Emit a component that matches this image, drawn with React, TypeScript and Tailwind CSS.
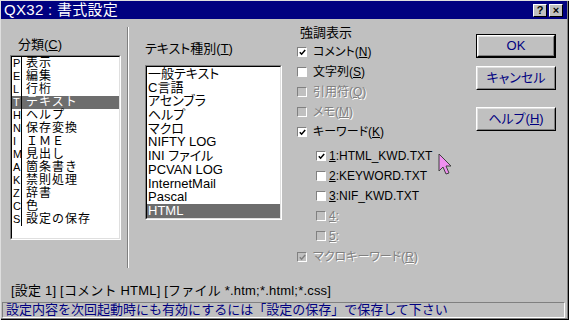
import type { ReactNode } from 'react';

const categories: [string, string][] = [
  ['P', '表示'],
  ['E', '編集'],
  ['L', '行桁'],
  ['T', 'テキスト'],
  ['H', 'ヘルプ'],
  ['N', '保存変換'],
  ['I', 'ＩＭＥ'],
  ['M', '見出し'],
  ['A', '箇条書き'],
  ['K', '禁則処理'],
  ['Z', '辞書'],
  ['C', '色'],
  ['S', '設定の保存'],
];

const textTypes = [
  '一般テキスト',
  'C言語',
  'アセンブラ',
  'ヘルプ',
  'マクロ',
  'NIFTY LOG',
  'INI ファイル',
  'PCVAN LOG',
  'InternetMail',
  'Pascal',
  'HTML',
];

function U({ children }: { children: ReactNode }) {
  return <span className="underline underline-offset-[1px]">{children}</span>;
}

function Sunken({ className, children }: { className?: string; children: ReactNode }) {
  return (
    <div className={`border border-t-[#808080] border-l-[#808080] border-b-white border-r-white ${className ?? ''}`}>
      <div className="h-full border border-t-black border-l-black border-b-[#dfdfdf] border-r-[#dfdfdf] bg-white overflow-hidden">
        {children}
      </div>
    </div>
  );
}

function Button({ children, isDefault }: { children: ReactNode; isDefault?: boolean }) {
  const inner = (
    <div className="h-full border border-t-white border-l-white border-b-black border-r-black">
      <div className="h-full flex items-center justify-center border border-t-[#dfdfdf] border-l-[#dfdfdf] border-b-[#808080] border-r-[#808080] text-[13px] text-[#000080]">
        {children}
      </div>
    </div>
  );
  return isDefault ? (
    <div className="h-[24px] border border-black">{inner}</div>
  ) : (
    <div className="h-[24px]">{inner}</div>
  );
}

function Check({
  checked,
  disabled,
  children,
  gap = 'gap-[6px]',
}: {
  checked?: boolean;
  disabled?: boolean;
  children: ReactNode;
  gap?: string;
}) {
  return (
    <div className={`h-[20px] flex items-center ${gap}`}>
      <span
        className={`w-[10px] h-[10px] shrink-0 flex items-center justify-center border border-t-[#808080] border-l-[#808080] border-b-white border-r-white ${
          disabled ? 'bg-[#c0c0c0]' : 'bg-white'
        }`}
      >
        {checked && (
          <svg width="7" height="7" viewBox="0 0 7 7">
            <path d="M0.8 3.2 L2.6 5.2 L6.2 1" fill="none" stroke={disabled ? '#808080' : '#000'} strokeWidth="1.5" />
          </svg>
        )}
      </span>
      <span
        className={`text-[12px] leading-[14px] whitespace-nowrap ${
          disabled ? 'text-[#808080] [text-shadow:1px_1px_0_#fff]' : 'text-black'
        }`}
      >
        {children}
      </span>
    </div>
  );
}

export default function App() {
  return (
    <div className="relative w-[569px] h-[320px] overflow-hidden bg-[#c0c0c0] border-t border-l border-[#dfdfdf] shadow-[inset_-1px_-1px_0_#000,inset_-2px_-2px_0_#808080] flex flex-col font-['Liberation_Sans','Noto_Sans_CJK_JP',sans-serif] [font-feature-settings:'palt'] text-black select-none">
      <div className="h-[18px] mr-[2px] bg-[#000080] flex items-center pl-[3px] pr-[4px]">
        <span className="text-white text-[15px] leading-[18px] whitespace-nowrap tracking-[0.3px]">QX32 : 書式設定</span>
        <div className="ml-auto flex gap-[2px]">
          {['?', '×'].map((g) => (
            <div
              key={g}
              className="w-[14px] h-[13px] bg-[#c0c0c0] border border-t-white border-l-white border-b-black border-r-black flex items-center justify-center text-[11px] leading-none font-bold"
            >
              {g}
            </div>
          ))}
        </div>
      </div>

      <div className="h-[262px] flex items-start">
        <div className="w-[126px] pl-[9px] pt-[19px] shrink-0">
          <div className="h-[17px] pl-[8px] text-[13px] leading-[14px]">
            分類(<U>C</U>)
          </div>
          <Sunken className="w-[111px] h-[185px]">
            {categories.map(([k, name], i) => (
              <div
                key={k}
                className={`h-[13px] flex text-[12px] leading-[13px] ${i === 3 ? 'bg-[#6d6d6d] text-white' : ''}`}
              >
                <span className="w-[10px] pl-[1px] border-r border-black text-[11px] leading-[13px]">{k}</span>
                <span className="pl-[4px] whitespace-nowrap tracking-[1px] [font-feature-settings:normal]">{name}</span>
              </div>
            ))}
          </Sunken>
        </div>

        <div className="mt-[8px] h-[241px] w-[2px] border-l border-l-[#808080] border-r border-r-white shrink-0" />

        <div className="ml-[16px] pt-[23px] shrink-0">
          <div className="h-[23px] text-[13px] leading-[14px]">
            テキスト種別(<U>T</U>)
          </div>
          <Sunken className="w-[137px] h-[155px]">
            {textTypes.map((t, i) => (
              <div
                key={t}
                className={`h-[13.7px] pl-[1px] text-[13px] leading-[13.7px] whitespace-nowrap ${
                  i === 10 ? 'bg-[#6d6d6d] text-white' : ''
                }`}
              >
                {t}
              </div>
            ))}
          </Sunken>
        </div>

        <div className="ml-[15px] pt-[4px] shrink-0">
          <div className="h-[19px] pl-[3px] text-[13px] leading-[19px]">強調表示</div>
          <Check checked>
            コメント(<U>N</U>)
          </Check>
          <Check>
            文字列(<U>S</U>)
          </Check>
          <Check disabled>
            引用符(<U>Q</U>)
          </Check>
          <Check disabled>
            メモ(<U>M</U>)
          </Check>
          <Check checked>
            キーワード(<U>K</U>)
          </Check>
          <div className="pl-[19px] pt-[4px]">
            <Check checked gap="gap-[3px]">
              <U>1</U>:HTML_KWD.TXT
            </Check>
            <Check gap="gap-[3px]">
              <U>2</U>:KEYWORD.TXT
            </Check>
            <Check gap="gap-[3px]">
              <U>3</U>:NIF_KWD.TXT
            </Check>
            <Check disabled gap="gap-[3px]">
              <U>4</U>:
            </Check>
            <Check disabled gap="gap-[3px]">
              <U>5</U>:
            </Check>
          </div>
          <div className="mt-[1px]">
            <Check checked disabled>
              マクロキーワード(<U>R</U>)
            </Check>
          </div>
        </div>

        <div className="ml-auto mr-[13px] pt-[15px] w-[80px] flex flex-col shrink-0">
          <Button isDefault>OK</Button>
          <div className="mt-[8px]">
            <Button>キャンセル</Button>
          </div>
          <div className="mt-[17px]">
            <Button>
              ヘルプ(<U>H</U>)
            </Button>
          </div>
        </div>
      </div>

      <div className="h-[21px] pl-[10px] pt-[2px] text-[13px] leading-[16px] whitespace-nowrap tracking-[0.2px] [font-feature-settings:normal]">
        [設定 1] [コメント HTML] [ファイル *.htm;*.html;*.css]
      </div>

      <div className="mx-[1px] mr-[4px] h-[16px] border border-t-[#808080] border-l-[#808080] border-b-white border-r-white pl-[3px] text-[13px] leading-[14px] text-[#000080] whitespace-nowrap [font-feature-settings:normal]">
        設定内容を次回起動時にも有効にするには「設定の保存」で保存して下さい
      </div>

      <svg className="absolute left-[437px] top-[152px]" width="16" height="24" viewBox="0 0 16 24">
        <path
          d="M1 1 L1 18 L5 14 L8 21 L11 20 L8 13 L13 13 Z"
          fill="#f090f0"
          stroke="#404040"
          strokeWidth="1"
          strokeLinejoin="round"
        />
      </svg>
    </div>
  );
}
